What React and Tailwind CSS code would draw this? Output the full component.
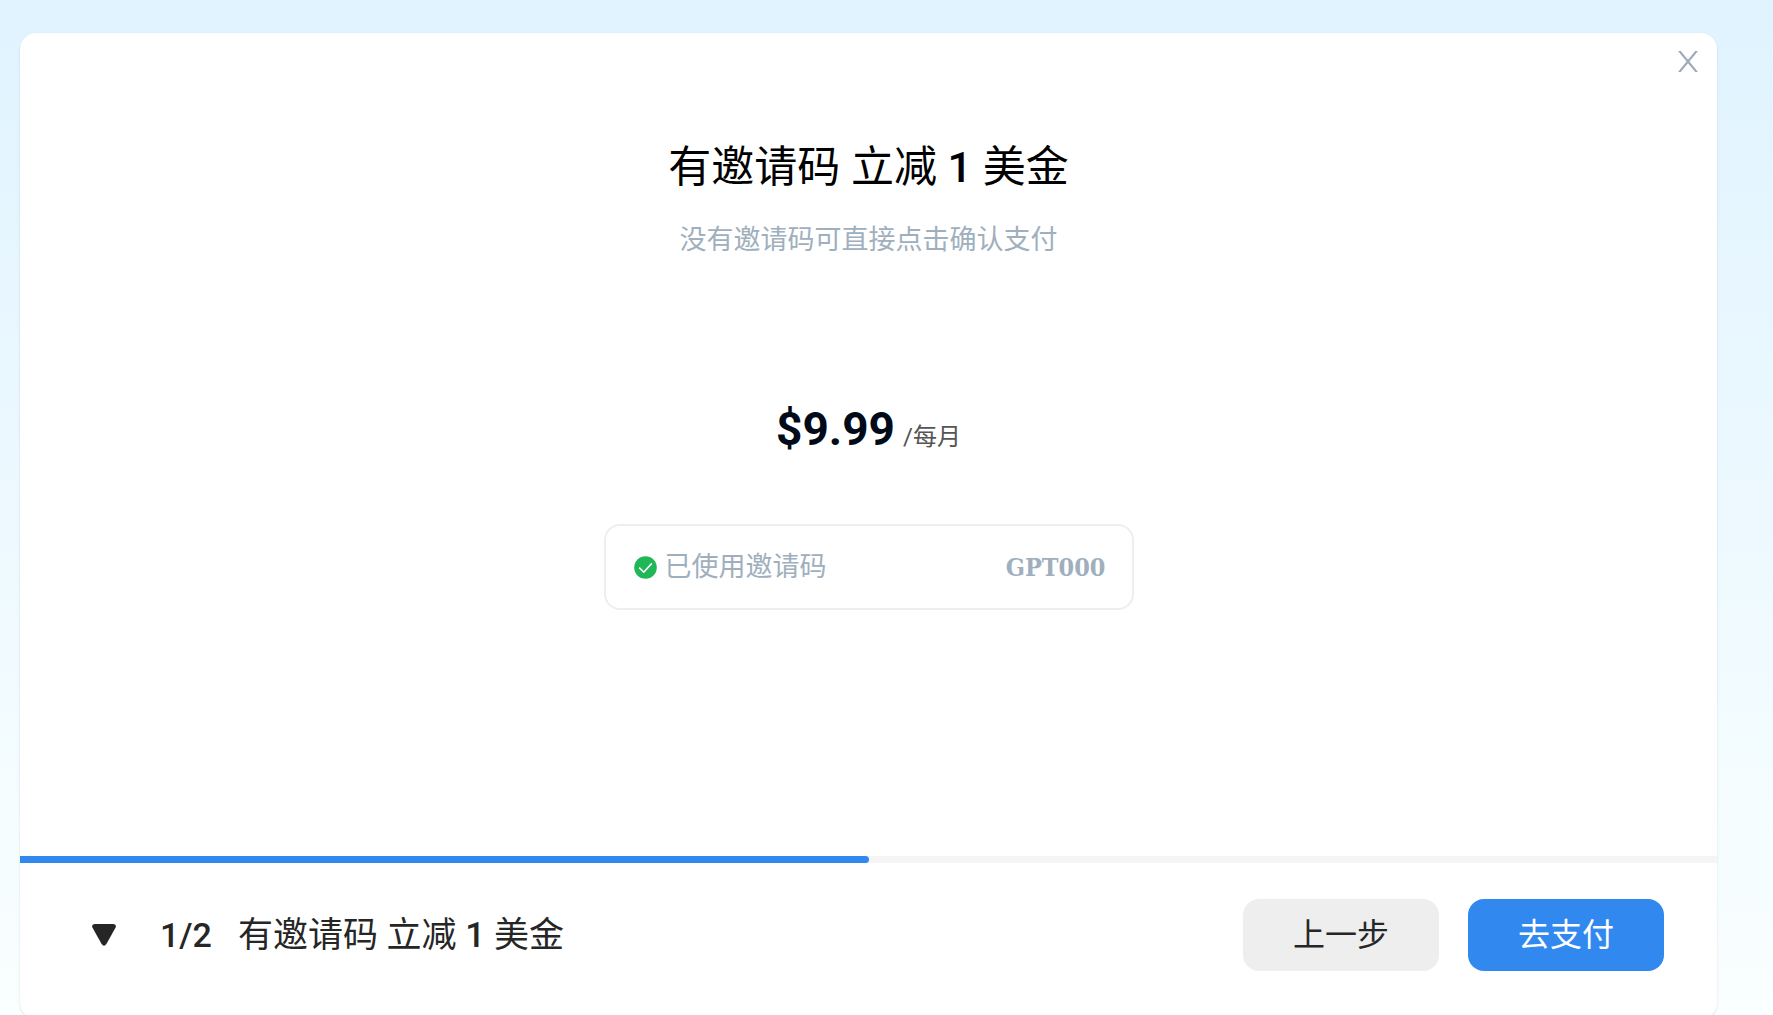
const step = { current: 1, total: 2 };

// The amount is heavier than the text around it
function Title() {
    return (
        <>有邀请码 立减 <span className="font-medium">1</span> 美金</>
    );
}

function CloseIcon() {
    return (
        <svg viewBox="0 0 20 21" className="w-5 h-[21px]" fill="currentColor" aria-hidden="true">
            <path d="M0 0 H2.8 L20 21 H17.2 Z" />
            <path d="M20 0 H17.2 L0 21 H2.8 Z" />
        </svg>
    );
}

function CheckIcon() {
    return (
        <svg viewBox="0 0 23 23" className="w-[23px] h-[23px] shrink-0" fill="none" aria-hidden="true">
            <circle cx="11.5" cy="11.5" r="11.3" fill="#20b758" />
            <path d="M5.2 11.6 L9.8 16.2 L17.8 7.4" stroke="#ffffff" strokeWidth="1.6" />
        </svg>
    );
}

function TriangleIcon() {
    return (
        <svg viewBox="0 0 24 22" className="w-6 h-[22px]" fill="#262626" aria-hidden="true">
            <path d="M2.5 0 H21.5 Q24.8 0.4 23.6 3.6 L14.4 20 Q12 23.6 9.6 20 L0.4 3.6 Q-0.8 0.4 2.5 0 Z" />
        </svg>
    );
}

function InviteCode({ code }) {
    return (
        <div className="flex items-center w-[530px] h-[86px] mx-auto pl-7 pr-[26px] rounded-2xl border-2 border-[#eeeeee] text-[#a0afbd]">
            <CheckIcon />
            <span className="ml-2 text-[27px] leading-10">已使用邀请码</span>
            <span className="ml-auto pt-0.5 font-['DejaVu_Serif_Condensed','DejaVu_Serif',serif] font-bold text-[25px] leading-10">{code}</span>
        </div>
    );
}

function Footer() {
    return (
        <footer className="flex items-center h-36 pl-[72px] pr-[53px] text-[#262626]">
            <button type="button" aria-label="收起" className="cursor-pointer">
                <TriangleIcon />
            </button>
            <div className="flex items-baseline gap-[26px] ml-11 leading-10">
                <span className="text-[34px] font-medium">{step.current}/{step.total}</span>
                <span className="text-[35px]"><Title /></span>
            </div>
            <div className="flex gap-[29px] ml-auto">
                <button type="button" className="w-[196px] h-[72px] rounded-2xl bg-[#eeeeee] text-[32px] cursor-pointer">上一步</button>
                <button type="button" className="w-[196px] h-[72px] rounded-2xl bg-[#3188ef] text-[32px] text-white cursor-pointer">去支付</button>
            </div>
        </footer>
    );
}

export default function App() {
    return (
        <main className="h-screen overflow-hidden pt-[33px] pl-5 pr-14 bg-gradient-to-b from-[#e0f3ff] to-[#faffff] font-[Roboto,'Noto_Sans_CJK_SC',sans-serif]">
            <section className="relative rounded-2xl overflow-hidden bg-white shadow-sm">
                <button type="button" aria-label="关闭" className="absolute top-[18px] right-[19px] text-[#9dabb8] cursor-pointer">
                    <CloseIcon />
                </button>

                <div className="pt-[104px] pb-[246px] text-center">
                    <h1 className="text-[43px] leading-[60px] font-normal text-black"><Title /></h1>
                    <p className="mt-[23px] text-[27px] leading-10 text-[#a0afbd]">没有邀请码可直接点击确认支付</p>
                    <p className="flex items-baseline justify-center gap-2 mt-[137px] mb-[55px] leading-[64px]">
                        <span className="text-[46px] font-bold text-[#000a18]">$9.99</span>
                        <span className="text-2xl leading-[64px] text-[#555555]">/每月</span>
                    </p>
                    <InviteCode code="GPT000" />
                </div>

                <div role="progressbar" aria-valuenow={step.current} aria-valuemin={0} aria-valuemax={step.total} className="h-[7px] bg-[#f5f5f5]">
                    <div className="h-full rounded-r-full bg-[#3188ef]" style={{ width: `${(step.current / step.total) * 100}%` }} />
                </div>

                <Footer />
                <div className="h-3" />
            </section>
        </main>
    );
}
